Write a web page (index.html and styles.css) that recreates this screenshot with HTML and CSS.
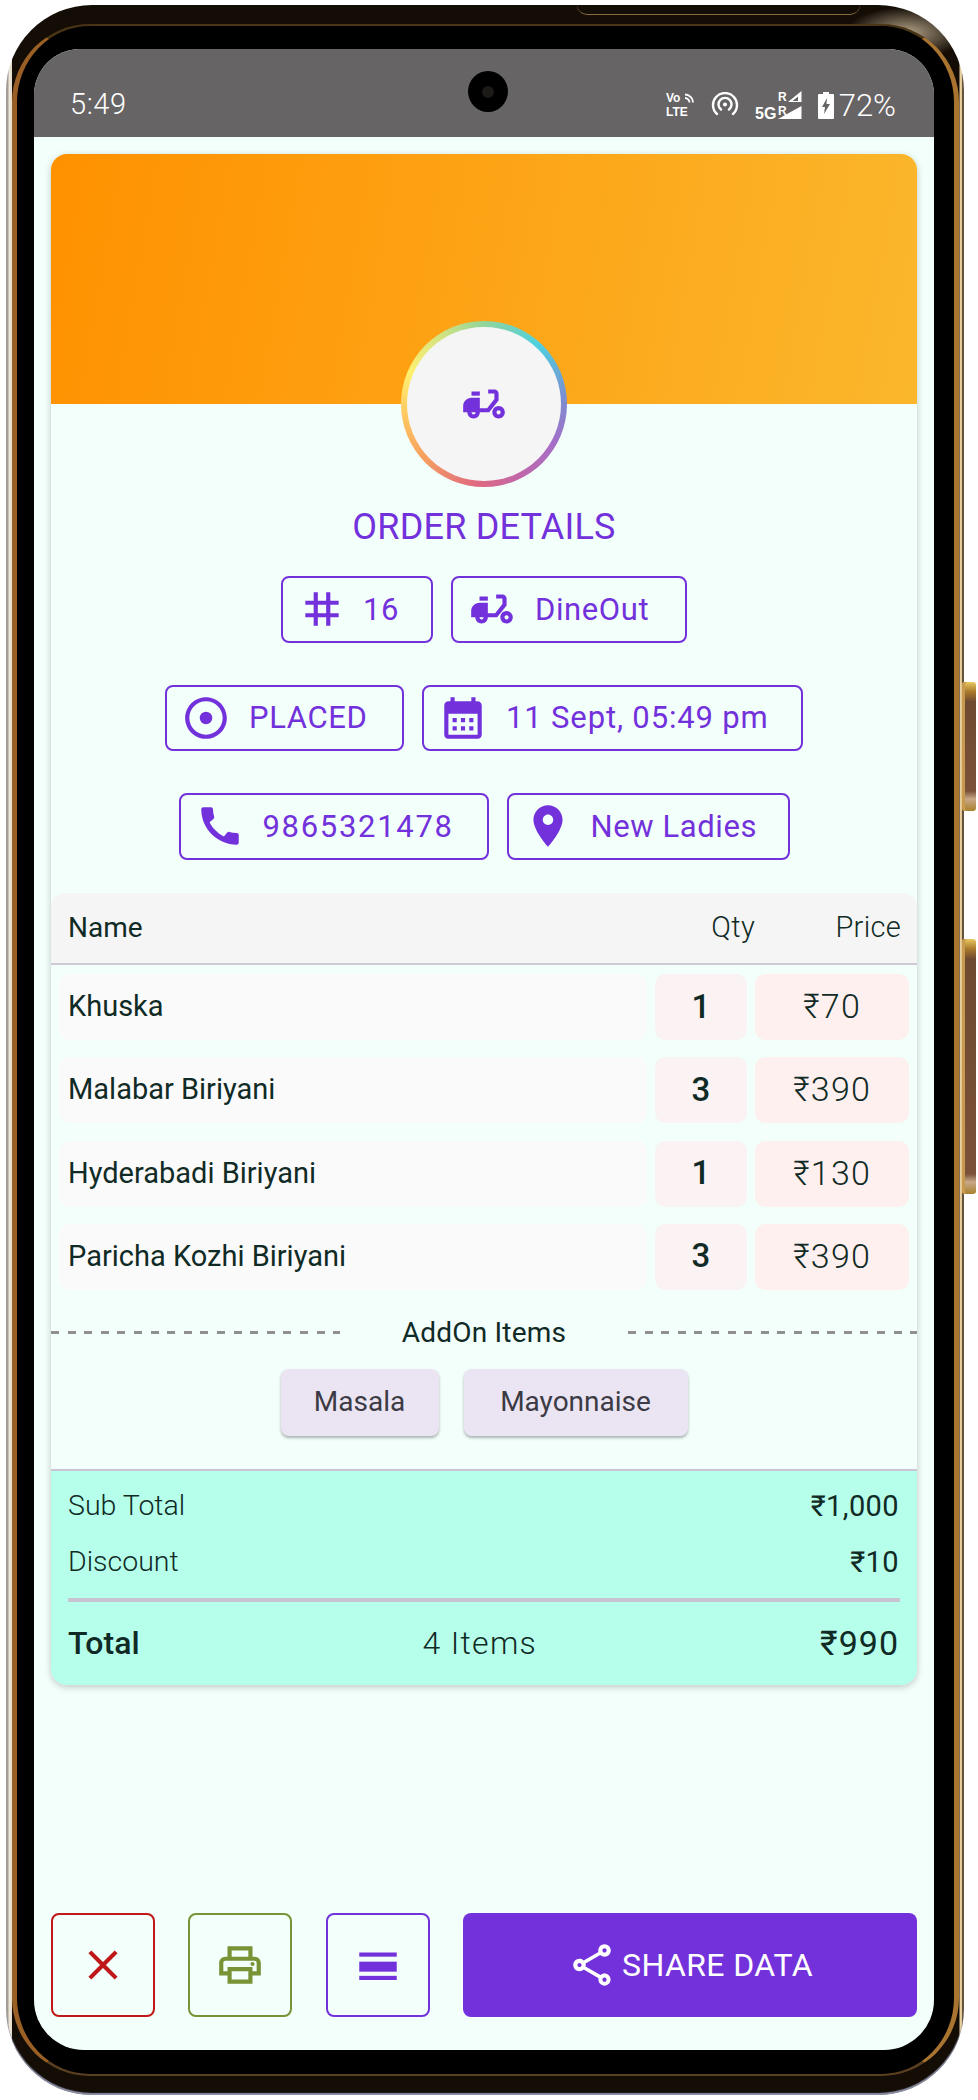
FILE: index.html
```html
<!DOCTYPE html>
<html lang="en">

<head>
    <meta charset="UTF-8">
    <meta name="viewport" content="width=device-width, initial-scale=1.0">
    <title>Order Details</title>
    <link rel="stylesheet" href="styles.css">
</head>

<body>
    <div class="phone">
        <span class="side-key side-key-short"></span>
        <span class="side-key side-key-long"></span>
        <span class="top-slot"></span>
        <div class="bezel">
            <div class="screen">
                <div class="status-bar">
                    <span class="clock">5:49</span>
                    <span class="camera"><i></i></span>
                    <div class="status-icons">
                        <svg class="volte" width="30" height="30" viewBox="0 -2 30 30">
                            <text x="0" y="10" class="tiny">Vo</text>
                            <text x="0" y="24" class="tiny">LTE</text>
                            <path d="M19 2.500a8 8 0 0 1 8 8M19 6a4.500 4.500 0 0 1 4.500 4.500" fill="none" stroke="#fff" stroke-width="1.800"/>
                        </svg>
                        <svg class="hotspot" width="28" height="26" viewBox="0 0 28 26">
                            <path d="M6 22a12 12 0 1 1 16 0M10 17.500a6.500 6.500 0 1 1 8 0" fill="none" stroke="#fff" stroke-width="2.400" stroke-linecap="round"/>
                            <circle cx="14" cy="12.500" r="2" fill="#fff"/>
                        </svg>
                        <svg class="signal" width="48" height="36" viewBox="0 -2 48 36">
                            <text x="23" y="11" class="tiny">R</text>
                            <path d="M33 12 46.500 1v11z M43 6.500 V11 H37.500z" fill="#fff" fill-rule="evenodd"/>
                            <text x="0" y="29" class="tiny-wide">5G</text>
                            <text x="23" y="25" class="tiny">R</text>
                            <path d="M23 29 46.500 16v13z" fill="#fff"/>
                        </svg>
                        <svg class="battery" width="16" height="27" viewBox="0 0 16 27">
                            <path d="M5 0h6v2h4a1 1 0 0 1 1 1v23a1 1 0 0 1-1 1H1a1 1 0 0 1-1-1V3a1 1 0 0 1 1-1h4z" fill="#fff"/>
                            <path d="M9 6 4 15h3l-1 7 6-10H8.500z" fill="#666464"/>
                        </svg>
                        <span class="battery-level">72%</span>
                    </div>
                </div>

                <div class="content">
                    <div class="card">
                        <div class="card-banner"></div>
                        <div class="avatar-ring">
                            <div class="avatar">
                                <svg class="icon" viewBox="0 0 24 24"><path d="M19 7c0-1.100-.9-2-2-2h-3v2h3v2.650L13.520 14H10V9H6c-2.210 0-4 1.790-4 4v3h2c0 1.660 1.340 3 3 3s3-1.340 3-3h4.480L19 10.350V7zM7 17c-.55 0-1-.45-1-1h2c0 .55-.45 1-1 1z"/><path d="M6 6h4v2H6z"/><path d="M19 13c-1.660 0-3 1.340-3 3s1.340 3 3 3 3-1.340 3-3-1.340-3-3-3zm0 4c-.55 0-1-.45-1-1s.45-1 1-1 1 .45 1 1-.45 1-1 1z"/></svg>
                            </div>
                        </div>
                        <h1 class="card-title">ORDER DETAILS</h1>

                        <div class="badge-row">
                            <div class="badge badge-id">
                                <svg class="icon" viewBox="0 0 24 24"><path d="M20 10V8h-4V4h-2v4h-4V4H8v4H4v2h4v4H4v2h4v4h2v-4h4v4h2v-4h4v-2h-4v-4h4zm-6 4h-4v-4h4v4z"/></svg>
                                <span>16</span>
                            </div>
                            <div class="badge badge-type">
                                <svg class="icon" viewBox="0 0 24 24"><path d="M19 7c0-1.100-.9-2-2-2h-3v2h3v2.650L13.520 14H10V9H6c-2.210 0-4 1.790-4 4v3h2c0 1.660 1.340 3 3 3s3-1.340 3-3h4.480L19 10.350V7zM7 17c-.55 0-1-.45-1-1h2c0 .55-.45 1-1 1z"/><path d="M6 6h4v2H6z"/><path d="M19 13c-1.660 0-3 1.340-3 3s1.340 3 3 3 3-1.340 3-3-1.340-3-3-3zm0 4c-.55 0-1-.45-1-1s.45-1 1-1 1 .45 1 1-.45 1-1 1z"/></svg>
                                <span>DineOut</span>
                            </div>
                        </div>
                        <div class="badge-row">
                            <div class="badge badge-status">
                                <svg class="icon" viewBox="0 0 24 24"><path d="M12 2C6.480 2 2 6.480 2 12s4.480 10 10 10 10-4.480 10-10S17.520 2 12 2zm0 18c-4.420 0-8-3.580-8-8s3.580-8 8-8 8 3.580 8 8-3.580 8-8 8z"/><circle cx="12" cy="12" r="3"/></svg>
                                <span>PLACED</span>
                            </div>
                            <div class="badge badge-date">
                                <svg class="icon" viewBox="0 0 24 24"><path d="M19 4h-1V2h-2v2H8V2H6v2H5c-1.110 0-1.990.9-1.990 2L3 20c0 1.100.89 2 2 2h14c1.100 0 2-.9 2-2V6c0-1.100-.9-2-2-2zm0 16H5V10h14v10zM9 14H7v-2h2v2zm4 0h-2v-2h2v2zm4 0h-2v-2h2v2zm-8 4H7v-2h2v2zm4 0h-2v-2h2v2zm4 0h-2v-2h2v2z"/></svg>
                                <span>11 Sept, 05:49 pm</span>
                            </div>
                        </div>
                        <div class="badge-row">
                            <div class="badge badge-phone">
                                <svg class="icon" viewBox="0 0 24 24"><path d="M20.010 15.380c-1.230 0-2.420-.2-3.530-.56-.35-.12-.74-.03-1.010.24l-1.570 1.970c-2.830-1.350-5.480-3.900-6.890-6.830l1.950-1.660c.27-.28.35-.67.24-1.020-.37-1.110-.56-2.300-.56-3.530 0-.54-.45-.99-.99-.99H4.190C3.650 3 3 3.240 3 3.990 3 13.280 10.730 21 20.010 21c.71 0 .99-.63.99-1.180v-3.450c0-.54-.45-.99-.99-.99z"/></svg>
                                <span>9865321478</span>
                            </div>
                            <div class="badge badge-place">
                                <svg class="icon" viewBox="0 0 24 24"><path d="M12 2C8.130 2 5 5.130 5 9c0 5.250 7 13 7 13s7-7.750 7-13c0-3.870-3.130-7-7-7zm0 9.500c-1.380 0-2.500-1.120-2.500-2.500s1.120-2.500 2.500-2.500 2.500 1.120 2.500 2.500-1.120 2.500-2.500 2.500z"/></svg>
                                <span>New Ladies</span>
                            </div>
                        </div>

                        <div class="items-head">
                            <span class="head-name">Name</span>
                            <span class="head-qty">Qty</span>
                            <span class="head-price">Price</span>
                        </div>
                        <div class="items">
                            <div class="item">
                                <span class="item-name">Khuska</span>
                                <span class="item-qty">1</span>
                                <span class="item-price">₹70</span>
                            </div>
                            <div class="item">
                                <span class="item-name">Malabar Biriyani</span>
                                <span class="item-qty">3</span>
                                <span class="item-price">₹390</span>
                            </div>
                            <div class="item">
                                <span class="item-name">Hyderabadi Biriyani</span>
                                <span class="item-qty">1</span>
                                <span class="item-price">₹130</span>
                            </div>
                            <div class="item">
                                <span class="item-name">Paricha Kozhi Biriyani</span>
                                <span class="item-qty">3</span>
                                <span class="item-price">₹390</span>
                            </div>
                        </div>

                        <div class="addon-title">
                            <span class="dash"></span>
                            <span>AddOn Items</span>
                            <span class="dash"></span>
                        </div>
                        <div class="addon-list">
                            <span class="chip chip-masala">Masala</span>
                            <span class="chip chip-mayo">Mayonnaise</span>
                        </div>

                        <div class="summary">
                            <div class="summary-row">
                                <span>Sub Total</span>
                                <span class="amount">₹1,000</span>
                            </div>
                            <div class="summary-row">
                                <span>Discount</span>
                                <span class="amount">₹10</span>
                            </div>
                            <div class="summary-line"></div>
                            <div class="summary-row summary-total">
                                <span class="total-label">Total</span>
                                <span class="total-count">4 Items</span>
                                <span class="total-amount">₹990</span>
                            </div>
                        </div>
                    </div>

                    <div class="actions">
                        <button class="square-btn btn-cancel">
                            <svg class="icon" viewBox="0 0 24 24"><path d="M19 6.410 17.590 5 12 10.590 6.410 5 5 6.410 10.590 12 5 17.590 6.410 19 12 13.410 17.590 19 19 17.590 13.410 12z"/></svg>
                        </button>
                        <button class="square-btn btn-print">
                            <svg class="icon" viewBox="0 0 24 24"><path d="M19 8h-1V3H6v5H5c-1.660 0-3 1.340-3 3v6h4v4h12v-4h4v-6c0-1.660-1.340-3-3-3zM8 5h8v3H8V5zm8 12v2H8v-4h8v2zm2-2v-2H6v2H4v-4c0-.55.45-1 1-1h14c.55 0 1 .45 1 1v4h-2z"/><circle cx="18" cy="11.500" r="1"/></svg>
                        </button>
                        <button class="square-btn btn-menu">
                            <svg class="icon" viewBox="0 0 24 24"><rect x="3" y="6" width="18" height="2"/><rect x="3" y="10.400" width="18" height="4.800"/><rect x="3" y="17.200" width="18" height="2"/></svg>
                        </button>
                        <button class="share-btn">
                            <svg class="icon" viewBox="0 0 24 24"><path d="M18 16.080c-.76 0-1.440.3-1.960.77L8.910 12.700c.05-.23.09-.46.09-.7s-.04-.47-.09-.7l7.050-4.110c.54.5 1.250.81 2.040.81 1.660 0 3-1.340 3-3s-1.340-3-3-3-3 1.340-3 3c0 .24.04.47.09.7L8.040 9.810C7.500 9.310 6.790 9 6 9c-1.660 0-3 1.340-3 3s1.340 3 3 3c.79 0 1.500-.31 2.040-.81l7.120 4.160c-.05.21-.08.43-.08.65 0 1.610 1.310 2.920 2.920 2.920s2.920-1.310 2.920-2.920-1.310-2.920-2.920-2.920zM18 4c.55 0 1 .45 1 1s-.45 1-1 1-1-.45-1-1 .45-1 1-1zM6 13c-.55 0-1-.45-1-1s.45-1 1-1 1 .45 1 1-.45 1-1 1zm12 7.020c-.55 0-1-.45-1-1s.45-1 1-1 1 .45 1 1-.45 1-1 1z"/></svg>
                            <span>SHARE DATA</span>
                        </button>
                    </div>
                </div>
            </div>
        </div>
    </div>
</body>

</html>
```

FILE: styles.css
```css
* {
    margin: 0;
    padding: 0;
    box-sizing: border-box;
}

body {
    background: #fff;
    font-family: Roboto, "Noto Sans", sans-serif;
    color: #102a25;
}

/* phone shell */
.phone {
    position: relative;
    width: 958px;
    height: 2090px;
    margin: 5px 0 0 6px;
    padding: 19px 5px 19px 6px;
    border-radius: 86px;
    background:
        radial-gradient(60px 26px at 900px 28px, rgba(235, 215, 180, 0.75), transparent),
        linear-gradient(90deg, #a8a298 0, #a09a90 2px, #efe8dc 3px, #e6dccb 6px, #140d06 6px, #140d06 calc(100% - 5px), #ead3a4 calc(100% - 4px), #e0c48e calc(100% - 2px), #6a563c calc(100% - 2px), #5a4a34 100%);
    box-shadow: inset 0 -2px 1px #8a8fa8;
}

.bezel {
    height: 100%;
    padding: 23px 20px 24px 17px;
    border-style: solid;
    border-width: 2px 5px;
    border-color: #4a3416 #a8742f #5a4020 #9a5f25;
    border-radius: 78px;
    background: #000;
}

.top-slot {
    position: absolute;
    top: 0;
    left: 571px;
    width: 283px;
    height: 10px;
    border-bottom: 1px solid #8a6a40;
    border-radius: 0 0 12px 12px;
}

.side-key {
    position: absolute;
    right: -12px;
    width: 14px;
    border-radius: 3px;
    background: linear-gradient(180deg, #e8c860 0, #a8782c 10px, #6f4a30 20px, #7a5238 calc(100% - 20px), #c8a888 calc(100% - 12px), #a8802c 100%);
    box-shadow: inset 3px 0 0 #c89a50;
}

.side-key-short {
    top: 677px;
    height: 129px;
}

.side-key-long {
    top: 934px;
    height: 255px;
}

.screen {
    display: flex;
    flex-direction: column;
    height: 100%;
    border-radius: 46px 46px 50px 50px;
    overflow: hidden;
    background: #f2fffb;
}

/* status bar */
.status-bar {
    position: relative;
    display: flex;
    align-items: center;
    justify-content: space-between;
    flex-shrink: 0;
    height: 88px;
    padding: 22px 38px 0 36px;
    background: #666464;
    color: #fff;
}

.clock {
    font-size: 29px;
    font-weight: 300;
    letter-spacing: 0.6px;
}

.camera {
    position: absolute;
    top: 22px;
    left: 434px;
    display: flex;
    align-items: center;
    justify-content: center;
    width: 40px;
    height: 41px;
    border-radius: 50%;
    background: #000;
}

.camera i {
    width: 12px;
    height: 12px;
    border-radius: 50%;
    background: #1c1a16;
}

.status-icons {
    display: flex;
    align-items: center;
    padding-top: 2px;
}

.tiny {
    font-family: "Liberation Sans", sans-serif;
    font-size: 12px;
    font-weight: 700;
    fill: #fff;
}

.tiny-wide {
    font-family: "Liberation Sans", sans-serif;
    font-size: 16px;
    font-weight: 700;
    fill: #fff;
}

.volte {
    margin-right: 15px;
}

.hotspot {
    margin-right: 16px;
}

.signal {
    margin: 2px 15px 0 0;
}

.battery-level {
    margin-left: 5px;
    font-size: 31px;
    font-weight: 300;
}

/* card */
.content {
    display: flex;
    flex-direction: column;
    flex: 1;
    padding: 17px 17px 33px;
}

.card {
    display: flex;
    flex-direction: column;
    align-items: center;
    border-radius: 16px;
    box-shadow: 0 2px 7px rgba(0, 0, 0, 0.22);
}

.card-banner {
    width: 100%;
    height: 250px;
    border-radius: 16px 16px 0 0;
    background: linear-gradient(100deg, #ff9100 0%, #fbb72c 100%);
}

.avatar-ring {
    width: 166px;
    height: 166px;
    margin-top: -83px;
    padding: 6px;
    border-radius: 50%;
    background: conic-gradient(#92d59a 0deg, #4fd0e0 42deg, #7a90d0 85deg, #a56dc8 120deg, #c268a8 155deg, #e06880 185deg, #f5a060 228deg, #ffc860 262deg, #fff070 292deg, #d8e480 325deg, #92d59a 360deg);
}

.avatar {
    display: flex;
    align-items: center;
    justify-content: center;
    height: 100%;
    border-radius: 50%;
    background: #f5f5f5;
}

.icon {
    flex-shrink: 0;
    width: 50px;
    height: 50px;
    fill: #7331db;
}

.card-title {
    margin-top: 18px;
    font-size: 36px;
    line-height: 45px;
    font-weight: 400;
    letter-spacing: 0.2px;
    color: #7331db;
}

/* badges */
.badge-row {
    display: flex;
    justify-content: center;
    gap: 18px;
    margin-top: 42px;
}

.card-title + .badge-row {
    margin-top: 26px;
}

.badge {
    display: flex;
    align-items: center;
    gap: 18px;
    height: 66.5px;
    padding-left: 14px;
    border: 2px solid #7331db;
    border-radius: 8px;
    font-size: 31px;
    letter-spacing: 0.6px;
    color: #7331db;
}

.badge-id { width: 152px; }
.badge-type { width: 236px; }
.badge-status { width: 239px; }
.badge-date { width: 381px; letter-spacing: 0.85px; }
.badge-phone { width: 310px; letter-spacing: 1.7px; }
.badge-place { width: 283px; }

.badge-id span {
    margin-left: -2px;
}

/* items table */
.items-head {
    display: flex;
    align-items: center;
    width: 100%;
    height: 72px;
    margin-top: 33.5px;
    padding: 0 16px 2px 17px;
    border-bottom: 2px solid #cfc9d6;
    border-radius: 14px 14px 0 0;
    background: #f5f5f5;
    font-size: 28px;
}

.head-name {
    flex: 1;
}

.head-qty,
.head-price {
    font-size: 29px;
    font-weight: 300;
    letter-spacing: 0.3px;
}

.head-price {
    width: 146px;
    text-align: right;
}

.items {
    display: flex;
    flex-direction: column;
    gap: 17.33px;
    width: 100%;
    padding: 9px 8px 0;
}

.item {
    display: grid;
    grid-template-columns: 1fr 92px 154px;
    gap: 8px;
    height: 66px;
}

.item span {
    display: flex;
    align-items: center;
    padding-bottom: 2px;
    border-radius: 10px;
}

.item-name {
    padding-left: 9px;
    background: #fafafa;
    font-size: 29px;
}

.item-qty {
    justify-content: center;
    background: #fbf3f3;
    font-size: 33px;
    font-weight: 500;
}

.item-price {
    justify-content: center;
    background: #fff0f0;
    font-size: 34px;
    font-weight: 300;
    letter-spacing: 1.2px;
}

/* addons */
.addon-title {
    display: flex;
    align-items: center;
    justify-content: space-between;
    width: 100%;
    margin-top: 25px;
    font-size: 28px;
    line-height: 36px;
    letter-spacing: 0.2px;
}

.dash {
    width: 289px;
    height: 3px;
    background: repeating-linear-gradient(90deg, #8f8f8f 0 8px, transparent 8px 16.6px);
}

.addon-list {
    display: flex;
    justify-content: center;
    gap: 25px;
    width: 100%;
    margin-top: 18px;
    padding-bottom: 33px;
    border-bottom: 2px solid #cbc5d3;
}

.chip {
    display: flex;
    align-items: center;
    justify-content: center;
    height: 67px;
    padding-bottom: 2px;
    border-radius: 8px;
    background: #ebe5f3;
    box-shadow: 0 2px 3px rgba(0, 0, 0, 0.3);
    font-size: 28px;
    color: #3c3a44;
}

.chip-masala { width: 158px; }
.chip-mayo { width: 224px; }

/* summary */
.summary {
    width: 100%;
    padding: 15px 18px 20px 17px;
    border-radius: 0 0 16px 16px;
    background: #b6ffea;
}

.summary-row {
    display: flex;
    align-items: center;
    justify-content: space-between;
    height: 40px;
    margin-bottom: 16px;
    font-size: 28.5px;
    font-weight: 300;
}

.summary-row .amount {
    font-size: 29px;
    font-weight: 400;
    letter-spacing: 0.4px;
}

.summary-line {
    height: 4px;
    margin-right: -1px;
    background: #c8c3d0;
}

.summary-total {
    height: 44px;
    margin: 19px 0 0;
}

.total-label {
    font-size: 32px;
    font-weight: 500;
}

.total-count {
    font-size: 32px;
    letter-spacing: 1.3px;
}

.total-amount {
    font-size: 34px;
    font-weight: 400;
    letter-spacing: 1px;
}

/* bottom actions */
.actions {
    display: flex;
    gap: 33.4px;
    margin-top: auto;
}

.actions button {
    display: flex;
    align-items: center;
    justify-content: center;
    height: 104px;
    border-radius: 8px;
    background: none;
    font-family: inherit;
}

.square-btn {
    width: 104px;
    border: 2px solid #7331db;
}

.btn-cancel {
    border-color: #c01818;
}

.btn-cancel .icon {
    fill: #c01818;
}

.btn-print {
    border-color: #7a9236;
}

.btn-print .icon {
    fill: #7a9236;
}

.actions .share-btn {
    flex: 1;
    gap: 5px;
    border: 0;
    background: #7331db;
    color: #fff;
    font-size: 32px;
    letter-spacing: 0.4px;
}

.share-btn .icon {
    fill: #fff;
}
```
